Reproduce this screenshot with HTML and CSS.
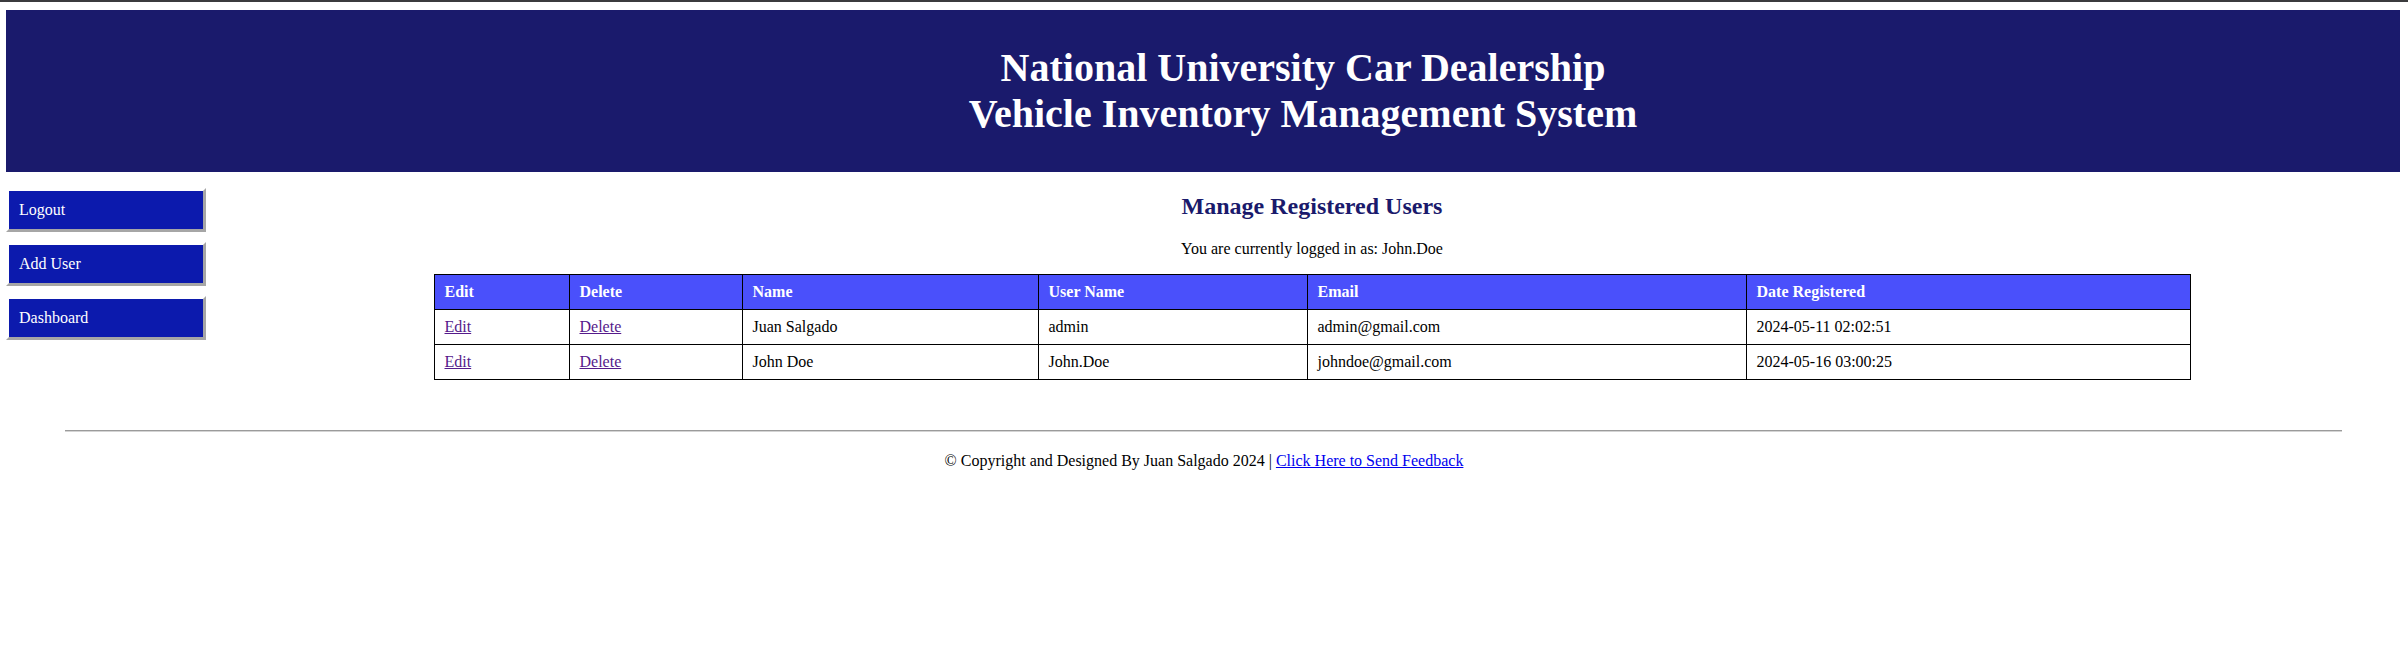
FILE: index.html
```html
<!DOCTYPE html>
<html lang="en">
<head>
<meta charset="utf-8">
<title>Manage Registered Users</title>
<link rel="stylesheet" href="styles.css">
</head>
<body>
<div class="topbar"></div>
<header class="header">
  <h1 class="title">National University Car Dealership<br>Vehicle Inventory Management System</h1>
</header>
<div class="layout">
  <nav class="sidebar">
    <a class="nav-btn" href="#">Logout</a>
    <a class="nav-btn" href="#">Add User</a>
    <a class="nav-btn" href="#">Dashboard</a>
  </nav>
  <main class="main">
    <h2 class="page-title">Manage Registered Users</h2>
    <p class="login-info">You are currently logged in as: John.Doe</p>
    <table class="users">
      <colgroup>
        <col class="c-edit">
        <col class="c-delete">
        <col class="c-name">
        <col class="c-user">
        <col class="c-email">
        <col class="c-date">
      </colgroup>
      <thead>
        <tr><th>Edit</th><th>Delete</th><th>Name</th><th>User Name</th><th>Email</th><th>Date Registered</th></tr>
      </thead>
      <tbody>
        <tr><td><a class="visited" href="#">Edit</a></td><td><a class="visited" href="#">Delete</a></td><td>Juan Salgado</td><td>admin</td><td>admin@gmail.com</td><td>2024-05-11 02:02:51</td></tr>
        <tr><td><a class="visited" href="#">Edit</a></td><td><a class="visited" href="#">Delete</a></td><td>John Doe</td><td>John.Doe</td><td>johndoe@gmail.com</td><td>2024-05-16 03:00:25</td></tr>
      </tbody>
    </table>
  </main>
</div>
<footer class="footer">
  <hr class="rule">
  <p class="copy">© Copyright and Designed By Juan Salgado 2024 | <a class="feedback" href="#">Click Here to Send Feedback</a></p>
</footer>
</body>
</html>
```

FILE: styles.css
```css
html, body {
  margin: 0;
  padding: 0;
  background: #ffffff;
}

body {
  font-family: "Liberation Serif", "Times New Roman", serif;
  font-size: 16px;
  color: #000000;
}

.topbar {
  height: 2px;
  background: #3b3b3d;
}

.header {
  margin: 8px 8px 0 6px;
  padding: 35px 0 35px 200px;
  background: #1a1a6c;
  text-align: center;
}

.title {
  margin: 0;
  font-size: 40px;
  font-weight: bold;
  line-height: 46px;
  color: #ffffff;
}

.layout {
  display: flex;
  gap: 10px;
  padding-left: 6px;
}

.sidebar {
  flex: none;
  width: 200px;
  padding-top: 16px;
  display: flex;
  flex-direction: column;
  gap: 10px;
}

.nav-btn {
  display: block;
  height: 38px;
  line-height: 38px;
  padding: 0 10px;
  border-style: solid;
  border-width: 3px;
  border-color: #ffffff #a6a6a6 #a6a6a6 #ffffff;
  background: #0c1aad;
  color: #ffffff;
  text-decoration: none;
  font-size: 16px;
}

.main {
  flex: 1;
  min-width: 0;
  text-align: center;
}

.page-title {
  margin: 21px 0 20px;
  font-size: 24px;
  font-weight: bold;
  color: #1a1a6c;
}

.login-info {
  margin: 0 0 16px;
}

.users {
  width: 1756px;
  margin: 0 auto;
  border-collapse: collapse;
  table-layout: fixed;
  text-align: left;
}

.c-edit { width: 135px; }
.c-delete { width: 173px; }
.c-name { width: 296px; }
.c-user { width: 269px; }
.c-email { width: 439px; }
.c-date { width: 444px; }

.users th,
.users td {
  border: 1px solid #000000;
  padding: 8px 10px;
  height: 18px;
  line-height: 18px;
  font-size: 16px;
}

.users th {
  background: #4a50fb;
  color: #ffffff;
  font-weight: bold;
}

.visited {
  color: #551a8b;
}

.footer {
  margin-top: 50px;
  text-align: center;
}

.rule {
  margin: 0 66px 0 65px;
  height: 0;
  border: 0;
  border-top: 1px solid #9b9b9b;
  border-bottom: 1px solid #d4d4d4;
}

.copy {
  margin: 20px 0 0;
}

.feedback {
  color: #0000ee;
}
```
